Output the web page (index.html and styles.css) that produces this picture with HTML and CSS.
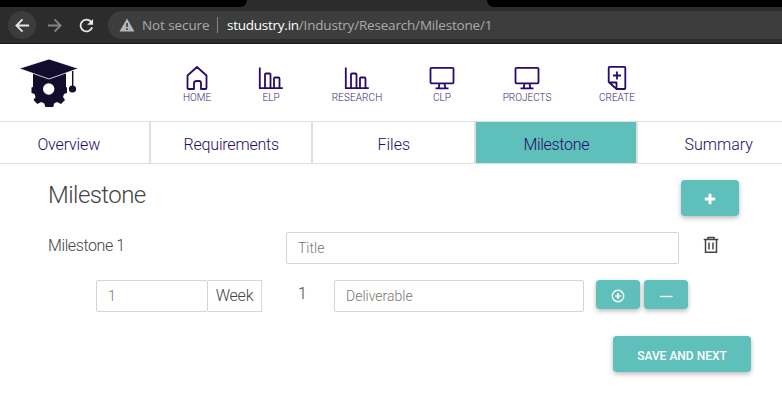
FILE: index.html
```html
<!DOCTYPE html>
<html lang="en">
<head>
<meta charset="utf-8">
<title>Milestone</title>
<link rel="stylesheet" href="styles.css">
</head>
<body>
<div class="browser">
  <div class="tabstrip"><span class="tab-left"></span><span class="tab-right"></span></div>
  <div class="toolbar">
    <span class="nav-btn back"><svg width="16" height="16" viewBox="0 0 16 16"><path d="M15 8H2M8 1.500 1.500 8 8 14.500"/></svg></span>
    <span class="nav-btn forward"><svg width="16" height="16" viewBox="0 0 16 16"><path d="M1 8h13M8 1.500 14.500 8 8 14.500"/></svg></span>
    <span class="nav-btn reload"><svg width="16" height="16" viewBox="0 0 16 16"><path d="M14 10A6.300 6.300 0 1 1 12.600 3.700L14 5"/><path class="solid" d="M15 1v6.300H8.700z"/></svg></span>
    <div class="omnibox">
      <svg class="warn" width="16" height="14" viewBox="0 0 16 14"><path d="M8 .5 15.500 13.500H.5z"/><path class="mark" d="M8 5v4M8 10.300v1.700"/></svg>
      <span class="insecure">Not secure</span>
      <span class="divider"></span>
      <span class="url"><b>studustry.in</b><span>/Industry/Research/Milestone/1</span></span>
    </div>
  </div>
</div>

<header class="site-header">
  <svg class="logo" width="60" height="50" viewBox="0 0 60 50">
    <path d="M14 12h33v16l1 .5v5.500l-3 1-1 3 2 3-4 4-4-2-3 1.500-.7 3.500h-8l-1-3.500-3-1.500-4 2-3.800-4 2-3-1-3-3-1v-5.500l1.500-.5z"/>
    <circle cx="29.700" cy="30" r="5.700" fill="#fff"/>
    <path class="cap" d="M0 9.500 30 0 59.500 9.500 30 20z"/>
    <path d="M53 12h1.400v15H53z"/><circle cx="53.500" cy="30" r="3.600"/>
  </svg>
  <nav class="menu">
    <a><svg width="26" height="26" viewBox="0 0 26 26"><path d="M3.500 10.500 13 2l9.500 8.500V23a1 1 0 0 1-1 1H17v-6q0-2-2-2h-2q-3 0-3 2v6H4.500a1 1 0 0 1-1-1z"/></svg><span class="t-home">HOME</span></a>
    <a><svg width="26" height="26" viewBox="0 0 26 26"><path d="M1.800 2.500v20.700h23M7 23V9.500q0-1 1-1h3.500q1 0 1 1V23M16 23v-9.500q0-1 1-1h3.500q1 0 1 1V23"/></svg><span class="t-elp">ELP</span></a>
    <a><svg width="26" height="26" viewBox="0 0 26 26"><path d="M1.800 2.500v20.700h23M7 23V9.500q0-1 1-1h3.500q1 0 1 1V23M16 23v-9.500q0-1 1-1h3.500q1 0 1 1V23"/></svg><span class="t-research">RESEARCH</span></a>
    <a><svg width="26" height="26" viewBox="0 0 26 26"><path d="M2.500 2.800h21q1 0 1 1v13.500q0 1-1 1h-21q-1 0-1-1V3.800q0-1 1-1zM10.500 18.500l-.8 4.500M15.500 18.500l.8 4.500M6.500 23.300h13"/></svg><span class="t-clp">CLP</span></a>
    <a><svg width="26" height="26" viewBox="0 0 26 26"><path d="M2.500 2.800h21q1 0 1 1v13.500q0 1-1 1h-21q-1 0-1-1V3.800q0-1 1-1zM10.500 18.500l-.8 4.500M15.500 18.500l.8 4.500M6.500 23.300h13"/></svg><span class="t-projects">PROJECTS</span></a>
    <a><svg width="26" height="26" viewBox="0 0 26 26"><path d="M4.700 17V2.700q0-.8.8-.8h15q.8 0 .8.800v20.500q0 .8-.8.800h-8zM5 17.500h7.500V24M13 6.500v8M9 10.500h8"/></svg><span class="t-create">CREATE</span></a>
  </nav>
</header>

<nav class="steps">
  <a><span class="s-overview">Overview</span></a><a><span class="s-req">Requirements</span></a><a><span class="s-files">Files</span></a><a class="active"><span class="s-mile">Milestone</span></a><a><span class="s-sum">Summary</span></a>
</nav>

<main>
  <div class="row heading">
    <h1>Milestone</h1>
    <button class="btn add"><svg width="12" height="12" viewBox="0 0 12 12"><path d="M6 .8v10.400M.8 6h10.400" stroke-width="3"/></svg></button>
  </div>
  <div class="row title-row">
    <label>Milestone 1</label>
    <input class="title" placeholder="Title">
    <svg class="trash" width="16" height="18" viewBox="0 0 16 18"><path d="M.7 3.500h14.600M5 3V1.500h6V3M2.500 4v12.300h11V4M6 6.500v7M10 6.500v7"/></svg>
  </div>
  <div class="row detail-row">
    <input class="weeks" placeholder="1"><span class="unit">Week</span>
    <span class="index">1</span>
    <input class="deliverable" placeholder="Deliverable">
    <button class="btn small"><svg width="14" height="14" viewBox="0 0 14 14"><circle cx="7" cy="7" r="5.700"/><path d="M7 4.300v5.400M4.300 7h5.400" stroke-width="1.700"/></svg></button>
    <button class="btn small"><svg width="14" height="14" viewBox="0 0 14 14"><path d="M1 7.500h12.500"/></svg></button>
  </div>
  <div class="row actions"><button class="btn save">SAVE AND NEXT</button></div>
</main>
</body>
</html>
```
FILE: styles.css
```css
* { box-sizing: border-box; }
body { margin: 0; min-height: 403px; background: #fff; font-family: Roboto, "Liberation Sans", sans-serif; font-weight: 300; color: #444; overflow: hidden; }
svg { display: block; fill: none; }

.browser { height: 44px; background: #2c2c2c; border-bottom: 1px solid #1b1b1b; }
.tabstrip { height: 7px; display: flex; justify-content: space-between; }
.tab-left { width: 247px; background: #000; border-bottom-right-radius: 7px; }
.tab-right { width: 295px; background: #000; border-bottom-left-radius: 7px; }
.toolbar { height: 36px; display: flex; align-items: center; padding-left: 8px; }
.nav-btn { width: 28px; height: 28px; border-radius: 50%; display: flex; align-items: center; justify-content: center; }
.nav-btn svg { stroke: #e8e8e8; stroke-width: 1.900; width: 15px; height: 15px; }
.back { background: #3c3c3c; }
.forward { margin-left: 4px; }
.forward svg { stroke: #858585; }
.reload { margin-left: 4px; }
.nav-btn .solid { fill: #e8e8e8; stroke: none; }
.omnibox { flex: 1; height: 28px; margin-left: 8px; padding-left: 11px; background: #3d3d3d; border-radius: 14px 0 0 14px; display: flex; align-items: center; font: 400 13.500px "Open Sans", sans-serif; color: #a8abae; white-space: nowrap; }
.warn { fill: #b4b7ba; }
.warn .mark { stroke: #3d3d3d; stroke-width: 1.600; }
.insecure { width: 75px; margin-left: 7px; letter-spacing: -.1px; }
.divider { width: 1px; height: 16px; background: #85888b; }
.url { margin-left: 9px; letter-spacing: -.19px; }
.url b { font-weight: 400; color: #fff; letter-spacing: -.25px; }

.site-header { height: 77px; display: flex; }
.logo { margin: 15px 0 0 19px; fill: #130d2d; }
.logo .cap { stroke: #fff; stroke-width: .8; }
.menu { margin-left: 81px; padding-top: 21px; display: grid; grid-template-columns: 74px 74px 98px 72px 98px 82px; }
.menu a { display: flex; flex-direction: column; align-items: center; font-size: 10px; line-height: 14px; color: #38236f; white-space: nowrap; }
.menu svg { stroke: #28096f; stroke-width: 1.800; stroke-linejoin: round; }
.t-research { letter-spacing: .1px; }

.steps { display: grid; grid-template-columns: repeat(5, 162.500px); height: 43px; margin-left: -13px; border: solid #dfdfdf; border-width: 1px 0; }
.steps a { border: solid #dfdfdf; border-width: 0 1px; display: flex; align-items: center; justify-content: center; font-size: 16px; color: #260a68; padding: 3px 0 0 1px; }
.steps .active { background: #5fbfba; }
.s-overview { letter-spacing: -.15px; }
.s-req { letter-spacing: -.2px; }
.s-mile { letter-spacing: -.3px; }

main { padding: 16px 0 0 48px; }
.row { display: flex; align-items: flex-start; }
.heading { height: 52px; }
h1 { margin: 0; width: 633px; font-size: 24px; line-height: 31px; font-weight: 300; letter-spacing: -.55px; }
.btn { border: 0; padding: 0; border-radius: 4px; background: #5fbfba; box-shadow: 0 2px 5px rgba(0,0,0,.28); display: flex; align-items: center; justify-content: center; color: #fff; }
.btn svg { stroke: #fff; stroke-width: 1.400; }
.add { width: 58px; height: 36px; padding-top: 2px; }
.title-row { height: 48px; }
label { width: 238px; font-size: 16px; line-height: 27px; letter-spacing: -.4px; }
input { height: 32px; padding: 0 11px; border: 1px solid #d5d5d5; border-radius: 2px; font: 300 14px Roboto, sans-serif; background: #fff; }
input::placeholder { color: #777; opacity: 1; }
.title { width: 393px; }
.trash { margin: 4px 0 0 24px; stroke: #444; stroke-width: 1.500; }
.detail-row { height: 56px; padding-left: 48px; }
.weeks { width: 112px; }
.unit { width: 54px; height: 32px; border: 1px solid #d9d9d9; border-left: 0; font-size: 16px; line-height: 29px; text-align: center; letter-spacing: -.2px; }
.index { width: 72px; padding-left: 36px; font-size: 16px; line-height: 28px; }
.deliverable { width: 250px; }
.small { width: 44px; height: 29px; margin-left: 12px; padding-top: 2px; }
.small + .small { margin-left: 4px; }
.save { width: 138px; height: 36px; margin-left: 565px; padding-top: 3px; font: 500 12px Roboto, sans-serif; }
```
